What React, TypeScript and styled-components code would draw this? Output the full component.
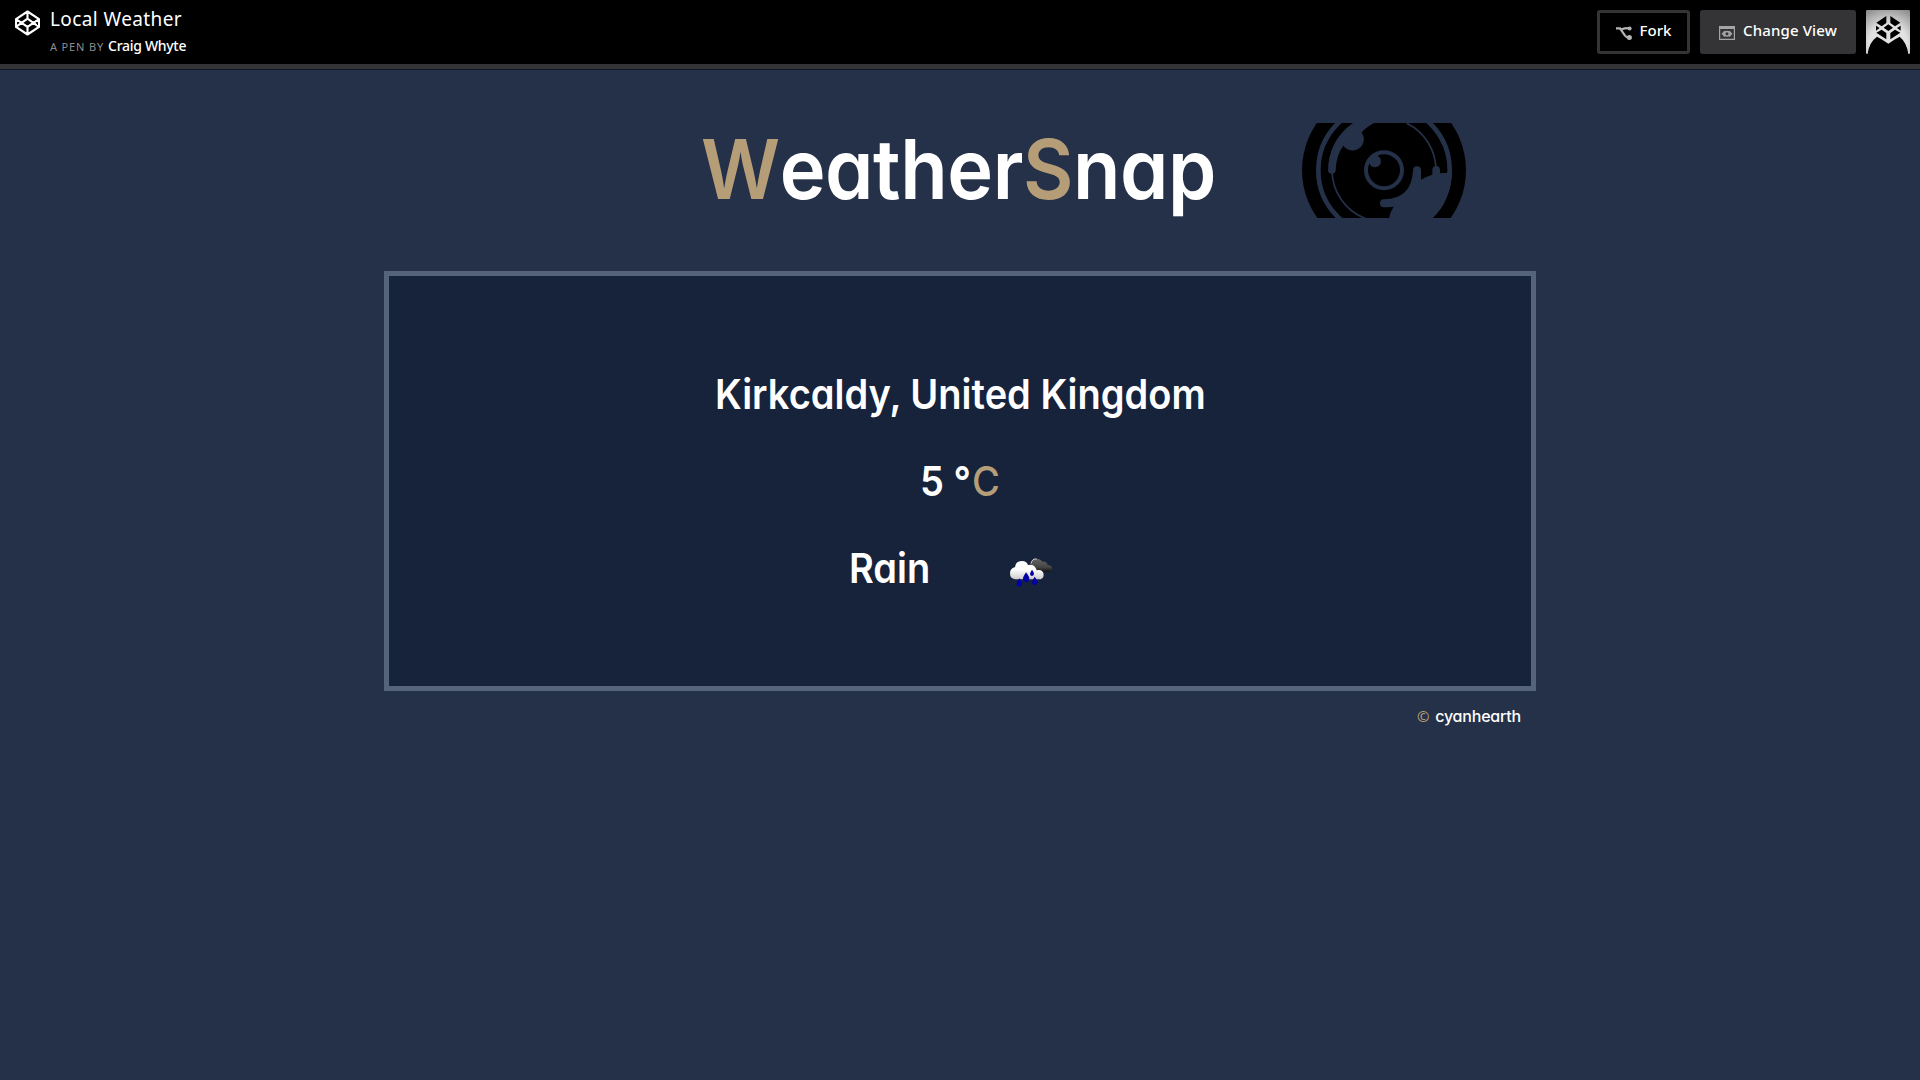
import React from "react";
import styled, { createGlobalStyle } from "styled-components";

const Global = createGlobalStyle`
  * { box-sizing: border-box; }
  body { margin: 0; background: #253148; color: #fff; font-family: "Inter", sans-serif; }
`;

const Header = styled.header`
  height: 70px;
  display: flex;
  justify-content: space-between;
  background: #000;
  border-bottom: 1px solid #101625;
  box-shadow: inset 0 -5px 0 #343436;
  font-family: "Noto Sans", sans-serif;
`;
const Brand = styled.div`
  display: flex;
  padding: 10px 0 0 15px;
  gap: 10px;
`;
const PenInfo = styled.div`
  margin-top: -3px;
`;
const PenTitle = styled.h1`
  margin: 0;
  font-size: 19px;
  line-height: 24px;
  font-weight: 400;
  letter-spacing: 0.4px;
  white-space: nowrap;
`;
const Byline = styled.div`
  display: flex;
  align-items: baseline;
  gap: 4px;
  margin-top: 5px;
  line-height: 20px;
  font-size: 11px;
  letter-spacing: 0.85px;
  color: #8c8c8e;
  white-space: nowrap;
`;
const Author = styled.span`
  color: #fff;
  font-size: 14px;
  font-weight: 500;
  letter-spacing: -0.3px;
`;
const Actions = styled.div`
  display: flex;
  gap: 10px;
  padding: 10px 10px 0 0;
`;
const Button = styled.button<{ $solid?: boolean; $width: number }>`
  width: ${(p) => p.$width}px;
  height: 44px;
  padding: 0 0 5px;
  display: flex;
  align-items: center;
  justify-content: center;
  gap: 8px;
  border: 3px solid #343436;
  border-radius: 3px;
  background: ${(p) => (p.$solid ? "#343436" : "#000")};
  color: #fff;
  font: 500 15px "Noto Sans", sans-serif;
  letter-spacing: ${(p) => (p.$solid ? 0.15 : 0)}px;
  white-space: nowrap;
  svg { margin-top: 6px; }
`;
const Page = styled.main`
  width: 1152px;
  margin: 0 auto;
`;
const Masthead = styled.div`
  display: grid;
  grid-template-columns: 1fr 495px 1fr;
  height: 201px;
  padding-top: 53px;
`;
const Title = styled.h2`
  grid-column: 2;
  margin: 0 0 0 -12px;
  display: flex;
  font-size: 83px;
  line-height: 92px;
  font-weight: 600;
  letter-spacing: -0.5px;
  font-feature-settings: "cv11";
  white-space: nowrap;
  transform: scaleX(0.935);
  transform-origin: left;
`;
const Gold = styled.span`
  color: #b59e77;
`;
const Lens = styled.svg`
  display: block;
  margin-left: 94px;
`;
const Panel = styled.section`
  height: 420px;
  border: 5px solid #55637b;
  background: #17233b;
  display: flex;
  flex-direction: column;
  align-items: center;
  padding-top: 93px;
`;
const Line = styled.div`
  height: 87px;
  display: flex;
  align-items: flex-start;
  font-size: 41px;
  line-height: 50px;
  font-weight: 600;
  font-feature-settings: "cv11";
  white-space: pre;
`;
const Narrow = styled.span<{ $origin?: string }>`
  display: block;
  transform: scaleX(0.928);
  transform-origin: ${(p) => p.$origin ?? "center"};
`;
const Unit = styled(Gold)`
  font-weight: 500;
  margin-left: 1px;
`;
const RainIcon = styled.svg`
  margin: 14px 0 0 72px;
`;
const Condition = styled(Line)`
  margin-right: 18px;
`;
const Credit = styled.footer`
  display: flex;
  justify-content: flex-end;
  gap: 6px;
  padding: 14px 15px 0 0;
  font-size: 16px;
  line-height: 23px;
  font-weight: 500;
  letter-spacing: -0.2px;
  font-feature-settings: "cv11";
`;
const Copy = styled.span`
  color: #b59e77;
  font-family: "Noto Sans", sans-serif;
  font-weight: 400;
  font-size: 15px;
`;

const CodepenMark = () => (
  <svg width="25" height="26" viewBox="44 29 76 78" fill="none" stroke="#fff" strokeWidth="6.5" strokeLinejoin="round">
    <path d="M82 33 117 56V80L82 103 47 80V56ZM82 33V55M82 80V103M47 56 82 80 117 56M47 80 82 55 117 80" />
  </svg>
);

const ForkIcon = () => (
  <svg width="16" height="14" viewBox="0 0 16 14" fill="none" stroke="#b4b4b5" strokeWidth="2.2">
    <path d="M0 2.4H4L9 9.6Q10.5 11.5 13 11.7M5 3.5Q8 2.2 13 2.2" />
    <circle cx="13.6" cy="2.4" r="2" fill="#b4b4b5" stroke="none" />
    <circle cx="13.4" cy="11.4" r="2.5" fill="#b4b4b5" stroke="none" />
  </svg>
);

const ViewIcon = () => (
  <svg width="16" height="14" viewBox="0 0 16 14" fill="none" stroke="#a5a5a6">
    <path d="M.6 .6H15.4V13.4H.6Z" strokeWidth="1.2" />
    <path d="M0 1.5H16" strokeWidth="3" />
    <path d="M6 5.200 3.700 7.800 6 10.400M10 5.200 12.300 7.800 10 10.400" strokeWidth="1.700" />
    <circle cx="8" cy="7.8" r="2.3" strokeWidth="1.5" />
  </svg>
);

const Avatar = () => (
  <svg width="44" height="44" viewBox="0 0 132 132">
    <defs>
      <radialGradient id="glow" cx="50%" cy="75%" r="85%">
        <stop offset=".5" stopColor="#e2e2e2" />
        <stop offset="1" stopColor="#8f8f8f" />
      </radialGradient>
    </defs>
    <rect width="132" height="132" rx="4" fill="url(#glow)" />
    <path d="M5 132Q9 97 33 80L49 89 67 101 85 89 101 80Q122 97 127 132Z" />
    <path d="M61 18V39L47 49 31 38ZM73 18V39L87 49 103 38ZM67 43 81 53 67 63 53 53ZM30 47 41 54 30 62ZM104 47 93 54 104 62ZM47 59 61 69V88L31 68ZM87 59 73 69V88L103 68Z" />
  </svg>
);

const LensLogo = () => (
  <Lens width="164" height="95" viewBox="36 39 492 284">
    <circle cx="282" cy="180" r="246" />
    <g fill="none" stroke="#253148">
      <circle cx="282" cy="180" r="197" strokeWidth="14" />
      <circle cx="282" cy="180" r="54" strokeWidth="12" />
      <path d="M126 180A156 156 0 0 0 226 325M350 39A157 157 0 0 1 438 180" strokeWidth="5" />
    </g>
    <g fill="#253148">
      <circle cx="255" cy="153" r="18" />
      <path d="M193 36Q115 88 114 183A12 11 0 0 0 137 183Q138 136 160 107A33 33 0 1 0 215 67Q228 51 255 37Z" />
      <path d="M369 180A12 12 0 0 1 393 180V209Q410 199 427 194V179A11.500 11.500 0 0 1 450 179V189L486 187Q482 273 427 325H297Q300 306 311 290Q299 292 282 291A12 12 0 0 1 282 267Q365 266 369 180Z" />
    </g>
  </Lens>
);

const Rain = () => (
  <RainIcon width="44" height="30" viewBox="0 0 132 90">
    <defs>
      <linearGradient id="white" x1="0" y1="0" x2="0" y2="1">
        <stop offset=".45" stopColor="#fff" />
        <stop offset="1" stopColor="#ccc" />
      </linearGradient>
      <linearGradient id="dark" x1="0" y1="0" x2="0" y2="1">
        <stop offset="0" stopColor="#666" />
        <stop offset=".65" stopColor="#444" />
        <stop offset="1" stopColor="#111" />
      </linearGradient>
    </defs>
    <path d="M67 22Q68 5 83 5Q94 5 100 14Q112 12 116 24Q129 24 130 36Q130 45 117 45H80Z" fill="url(#dark)" />
    <path d="M66 20Q69 4 83 6" fill="none" stroke="#ddd" strokeWidth="3" />
    <path d="M18 30Q20 12 39 12Q53 12 57 24Q77 19 83 40Q102 36 104 53Q104 67 88 67H18Q3 65 3 49Q3 34 18 30Z" fill="url(#white)" />
    <g fill="#0000a8">
      <path d="M51 46Q62 59 61 67Q58 76 51 76Q43 75 41 67Q42 58 51 46Z" />
      <path d="M69 38Q76 47 75 51Q73 57 69 57Q64 57 63 51Q63 47 69 38Z" />
      <path d="M31 64Q40 75 39 82Q37 89 31 89Q25 89 23 82Q23 75 31 64Z" />
      <path d="M77 59Q86 70 85 77Q83 84 77 84Q70 83 69 77Q69 71 77 59Z" />
    </g>
  </RainIcon>
);

export default function App() {
  return (
    <>
      <Global />
      <Header>
        <Brand>
          <CodepenMark />
          <PenInfo>
            <PenTitle>Local Weather</PenTitle>
            <Byline>
              A PEN BY <Author>Craig Whyte</Author>
            </Byline>
          </PenInfo>
        </Brand>
        <Actions>
          <Button $width={93}>
            <ForkIcon />
            Fork
          </Button>
          <Button $solid $width={156}>
            <ViewIcon />
            Change View
          </Button>
          <Avatar />
        </Actions>
      </Header>
      <Page>
        <Masthead>
          <Title>
            <Gold>W</Gold>eather<Gold>S</Gold>nap
          </Title>
          <LensLogo />
        </Masthead>
        <Panel>
          <Line>
            <Narrow>Kirkcaldy, United Kingdom</Narrow>
          </Line>
          <Line>
            <Narrow>
              5 °<Unit>C</Unit>
            </Narrow>
          </Line>
          <Condition>
            <Narrow $origin="left">Rain</Narrow>
            <Rain />
          </Condition>
        </Panel>
        <Credit>
          <Copy>©</Copy>
          <span>cyanhearth</span>
        </Credit>
      </Page>
    </>
  );
}
